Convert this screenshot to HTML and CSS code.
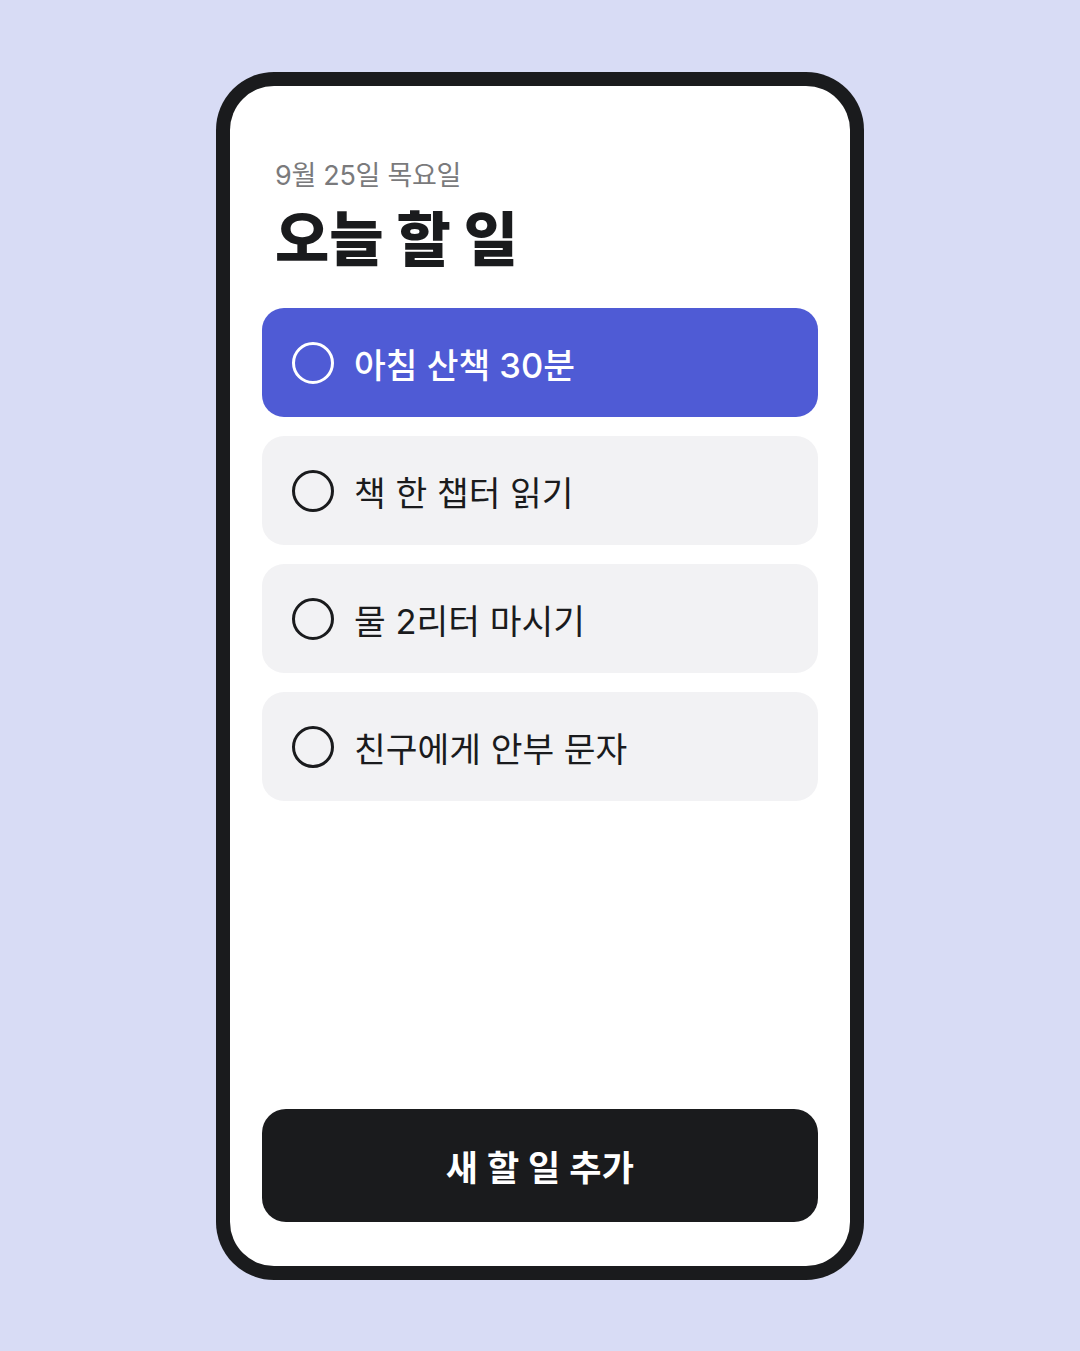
FILE: index.html
```html
<!DOCTYPE html>
<html lang="ko">
<head>
<meta charset="utf-8">
<title>오늘 할 일</title>
<link rel="stylesheet" href="styles.css">
</head>
<body>
<div class="stage">
  <div class="phone">
    <div class="screen">
      <header class="header">
        <div class="date">9월 25일 목요일</div>
        <h1 class="title">오늘 할 일</h1>
      </header>
      <ul class="list">
        <li class="item item-active"><span class="check"></span><span class="label">아침 산책 30분</span></li>
        <li class="item"><span class="check"></span><span class="label">책 한 챕터 읽기</span></li>
        <li class="item"><span class="check"></span><span class="label">물 2리터 마시기</span></li>
        <li class="item"><span class="check"></span><span class="label">친구에게 안부 문자</span></li>
      </ul>
      <button class="add">새 할 일 추가</button>
    </div>
  </div>
</div>
</body>
</html>
```

FILE: styles.css
```css
* { box-sizing: border-box; }
html, body {
  margin: 0;
  padding: 0;
  background: #d8dcf5;
  font-family: Inter, "Noto Sans CJK KR", sans-serif;
}
.stage {
  width: 1080px;
  height: 1351px;
  padding-top: 72px;
  display: flex;
  justify-content: center;
  align-items: flex-start;
}
.phone {
  width: 648px;
  height: 1208px;
  background: #1a1b1d;
  border-radius: 58px;
  padding: 14px;
}
.screen {
  width: 100%;
  height: 100%;
  background: #ffffff;
  border-radius: 44px;
  padding: 0 32px 44px;
  display: flex;
  flex-direction: column;
}
.header {
  padding: 72px 13px 0;
}
.date {
  font-size: 27px;
  line-height: 36px;
  color: #7a7a7c;
  letter-spacing: -0.3px;
}
.title {
  margin: 8px 0 0;
  font-size: 59px;
  line-height: 76px;
  font-weight: 800;
  color: #1a1b1d;
  letter-spacing: 0;
}
.list {
  list-style: none;
  margin: 30px 0 0;
  padding: 0;
  display: flex;
  flex-direction: column;
  gap: 19px;
}
.item {
  height: 109px;
  border-radius: 22px;
  background: #f2f2f4;
  display: flex;
  align-items: center;
  padding-left: 30px;
  color: #1a1b1d;
}
.item-active {
  background: #4f5bd5;
  color: #ffffff;
}
.check {
  width: 42px;
  height: 42px;
  border-radius: 50%;
  border: 3px solid currentColor;
  flex: none;
}
.label {
  margin-left: 20px;
  font-size: 34.5px;
  font-weight: 400;
  letter-spacing: 0;
}
.item-active .label { font-weight: 500; }
.add {
  margin-top: auto;
  height: 113px;
  border: none;
  border-radius: 24px;
  background: #1a1b1d;
  color: #ffffff;
  font-family: inherit;
  font-size: 35px;
  font-weight: 700;
  letter-spacing: 0.3px;
}
```
